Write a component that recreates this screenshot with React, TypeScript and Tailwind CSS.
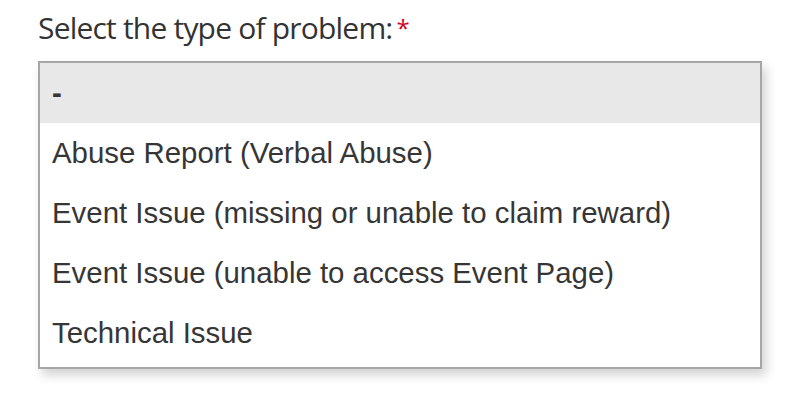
const options = [
  '-',
  'Abuse Report (Verbal Abuse)',
  'Event Issue (missing or unable to claim reward)',
  'Event Issue (unable to access Event Page)',
  'Technical Issue',
]

export default function App() {
  return (
    <div className="w-[800px] h-[416px] bg-white overflow-hidden">
      <div className="pl-[38px] pt-[9px] h-[61px]">
        <label className="text-[30px] leading-[38px] tracking-[-0.8px] text-[#333] font-['Open_Sans',sans-serif]">
          Select the type of problem:
          <span className="text-[#d0021b] ml-[4px] text-[24px] align-top">*</span>
        </label>
      </div>

      <div className="ml-[38px] w-[724px] border-2 border-[#a6a6a6] bg-white pb-[4px] shadow-[4px_6px_10px_rgba(0,0,0,0.18)]">
        {options.map((opt, i) => (
          <div
            key={opt}
            className={`h-[60px] flex items-center px-[12px] text-[29.4px] text-[#363636] font-['Liberation_Sans',Arial,sans-serif] ${i === 0 ? 'bg-[#e8e8e8] font-bold text-[#222]' : ''}`}
          >
            {opt}
          </div>
        ))}
      </div>
    </div>
  )
}
